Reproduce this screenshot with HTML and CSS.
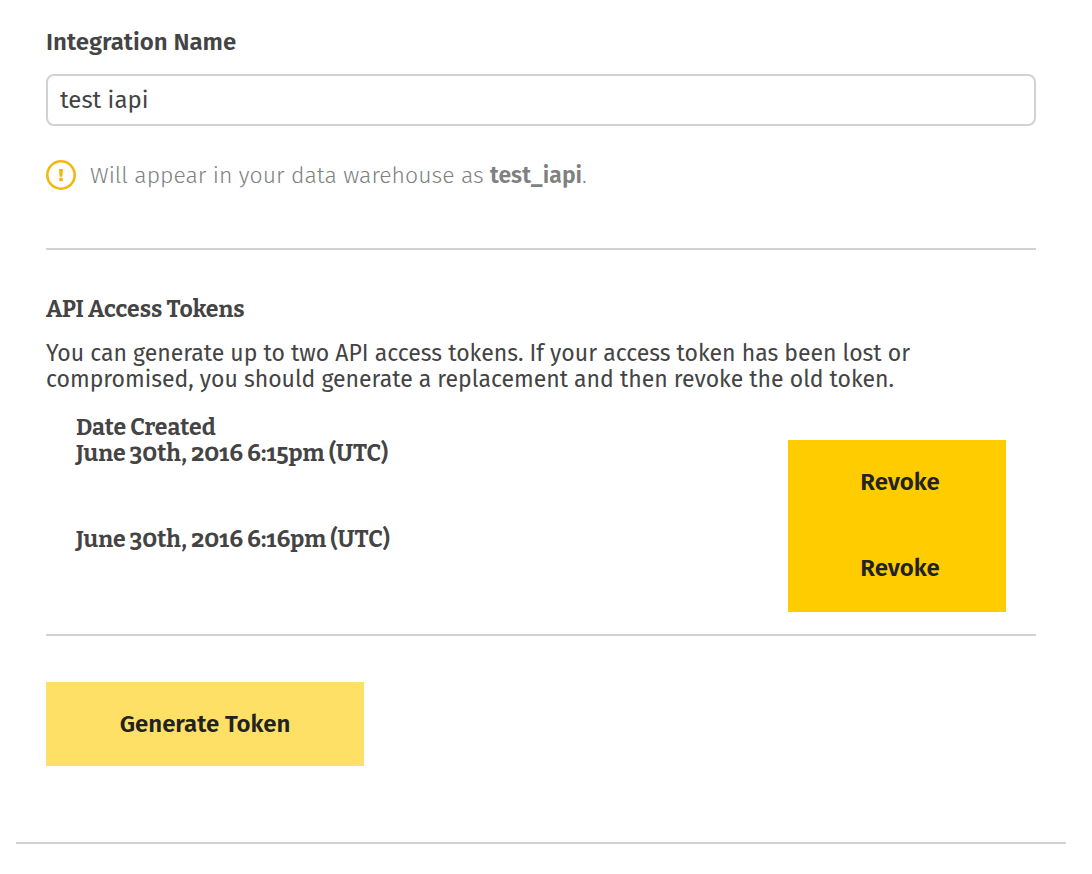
FILE: index.html
```html
<!DOCTYPE html>
<html lang="en">
<head>
<meta charset="utf-8">
<title>Integration settings</title>
<link rel="stylesheet" href="styles.css">
</head>
<body>
<main class="page">
  <form class="settings">
    <section class="name">
      <label class="name-label" for="name">Integration Name</label>
      <input class="name-input" id="name" type="text" value="test iapi">
      <p class="hint">
        <svg class="hint-icon" viewBox="0 0 30 30" aria-hidden="true">
          <circle cx="15" cy="15" r="13.7" fill="none" stroke="#f2b712" stroke-width="2.6"/>
          <path d="M13 9h4l-.6 7.8h-2.8z" fill="#f2b712"/>
          <circle cx="15" cy="19.6" r="2" fill="#f2b712"/>
        </svg>
        <span>Will appear in your data warehouse as <strong>test_iapi</strong>.</span>
      </p>
    </section>
    <section class="tokens">
      <h2 class="tokens-title">API Access Tokens</h2>
      <p class="tokens-text">You can generate up to two API access tokens. If your access token has been lost or compromised, you should generate a replacement and then revoke the old token.</p>
      <div class="token-list">
        <table class="token-table">
          <thead>
            <tr><th scope="col">Date Created</th><td></td></tr>
          </thead>
          <tbody>
            <tr><td>June 30th, 2016 6:15pm (UTC)</td><td class="action"><button class="button revoke" type="button">Revoke</button></td></tr>
            <tr><td>June 30th, 2016 6:16pm (UTC)</td><td class="action"><button class="button revoke" type="button">Revoke</button></td></tr>
          </tbody>
        </table>
      </div>
    </section>
    <button class="button generate" type="button">Generate Token</button>
  </form>
</main>
</body>
</html>
```
FILE: styles.css
```css
* { box-sizing: border-box; }
body { margin: 0; background: #fff; color: #444; font: 23px/26px "Fira Sans", "Noto Sans", sans-serif; }
h2, p { margin: 0; }
.page { padding: 0 26px 0 16px; }
.settings { padding: 28px 30px 76px; border-bottom: 2px solid #d2d2d2; }
.name { padding-bottom: 58px; border-bottom: 2px solid #d2d2d2; }
.name-label { display: block; margin-bottom: 18px; font-size: 24px; font-weight: 600; line-height: 28px; }
.name-input { display: block; width: 100%; height: 52px; padding: 0 12px; border: 2px solid #d2d2d2; border-radius: 8px; background: #fff; color: #444; font: inherit; font-size: 24px; }
.hint { display: flex; align-items: center; gap: 14px; margin-top: 34px; color: #808080; font-weight: 300; line-height: 30px; }
.hint-icon { flex: none; width: 30px; height: 30px; }
.hint strong { font-weight: 600; }
.tokens { padding: 46px 0 22px; border-bottom: 2px solid #d2d2d2; }
.tokens-title, .token-table { font: 700 23px/26px Bitter, "Liberation Serif", serif; font-variant-numeric: oldstyle-nums; }
.tokens-title { margin-bottom: 18px; }
.token-list { padding: 22px 30px 0; }
.token-table { width: 100%; border-collapse: collapse; text-align: left; }
.token-table th, .token-table td { padding: 0; vertical-align: top; }
.token-table .action { width: 218px; }
.button { display: block; border: 0; border-radius: 0; color: #222; background: #fc0; font: 600 24px/28px "Fira Sans", "Noto Sans", sans-serif; }
.revoke { width: 100%; height: 86px; padding: 0 3px 2px 9px; }
.generate { width: 318px; height: 84px; margin-top: 46px; padding: 0; background: #ffe066; }
```
